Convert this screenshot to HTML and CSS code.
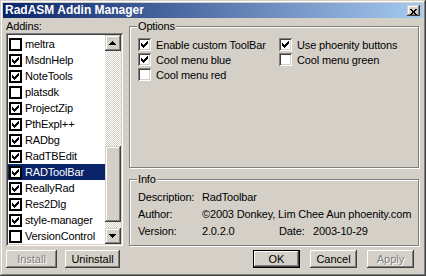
FILE: index.html
```html
<!DOCTYPE html>
<html lang="en">

<head>
  <meta charset="UTF-8">
  <meta name="viewport" content="width=device-width, initial-scale=1.0">
  <title>RadASM Addin Manager</title>
  <link rel="stylesheet" href="styles.css">
</head>

<body>
  <div class="window">
    <header class="titlebar">
      <span class="title">RadASM Addin Manager</span>
      <button class="close-btn" aria-label="Close">
        <svg width="7" height="6" viewBox="0 0 7 6"><path d="M0 0h2v1H0zM5 0h2v1H5zM1 1h2v1H1zM4 1h2v1H4zM2 2h3v2H2zM1 4h2v1H1zM4 4h2v1H4zM0 5h2v1H0zM5 5h2v1H5z"/></svg>
      </button>
    </header>

    <div class="dialog">
      <!-- left: addin list -->
      <section class="addins">
        <div class="label">Addins:</div>
        <div class="listbox">
          <ul class="items">
            <li class="item"><span class="box"></span>meltra</li>
            <li class="item"><span class="box"><svg class="tick" viewBox="0 0 7 7"><path d="M0 2h1v3H0zM1 3h1v3H1zM2 4h1v3H2zM3 3h1v3H3zM4 2h1v3H4zM5 1h1v3H5zM6 0h1v3H6z"/></svg></span>MsdnHelp</li>
            <li class="item"><span class="box"><svg class="tick" viewBox="0 0 7 7"><path d="M0 2h1v3H0zM1 3h1v3H1zM2 4h1v3H2zM3 3h1v3H3zM4 2h1v3H4zM5 1h1v3H5zM6 0h1v3H6z"/></svg></span>NoteTools</li>
            <li class="item"><span class="box"></span>platsdk</li>
            <li class="item"><span class="box"><svg class="tick" viewBox="0 0 7 7"><path d="M0 2h1v3H0zM1 3h1v3H1zM2 4h1v3H2zM3 3h1v3H3zM4 2h1v3H4zM5 1h1v3H5zM6 0h1v3H6z"/></svg></span>ProjectZip</li>
            <li class="item"><span class="box"><svg class="tick" viewBox="0 0 7 7"><path d="M0 2h1v3H0zM1 3h1v3H1zM2 4h1v3H2zM3 3h1v3H3zM4 2h1v3H4zM5 1h1v3H5zM6 0h1v3H6z"/></svg></span>PthExpl++</li>
            <li class="item"><span class="box"><svg class="tick" viewBox="0 0 7 7"><path d="M0 2h1v3H0zM1 3h1v3H1zM2 4h1v3H2zM3 3h1v3H3zM4 2h1v3H4zM5 1h1v3H5zM6 0h1v3H6z"/></svg></span>RADbg</li>
            <li class="item"><span class="box"><svg class="tick" viewBox="0 0 7 7"><path d="M0 2h1v3H0zM1 3h1v3H1zM2 4h1v3H2zM3 3h1v3H3zM4 2h1v3H4zM5 1h1v3H5zM6 0h1v3H6z"/></svg></span>RadTBEdit</li>
            <li class="item selected"><span class="box"><svg class="tick" viewBox="0 0 7 7"><path d="M0 2h1v3H0zM1 3h1v3H1zM2 4h1v3H2zM3 3h1v3H3zM4 2h1v3H4zM5 1h1v3H5zM6 0h1v3H6z"/></svg></span>RADToolBar</li>
            <li class="item"><span class="box"><svg class="tick" viewBox="0 0 7 7"><path d="M0 2h1v3H0zM1 3h1v3H1zM2 4h1v3H2zM3 3h1v3H3zM4 2h1v3H4zM5 1h1v3H5zM6 0h1v3H6z"/></svg></span>ReallyRad</li>
            <li class="item"><span class="box"><svg class="tick" viewBox="0 0 7 7"><path d="M0 2h1v3H0zM1 3h1v3H1zM2 4h1v3H2zM3 3h1v3H3zM4 2h1v3H4zM5 1h1v3H5zM6 0h1v3H6z"/></svg></span>Res2Dlg</li>
            <li class="item"><span class="box"><svg class="tick" viewBox="0 0 7 7"><path d="M0 2h1v3H0zM1 3h1v3H1zM2 4h1v3H2zM3 3h1v3H3zM4 2h1v3H4zM5 1h1v3H5zM6 0h1v3H6z"/></svg></span>style-manager</li>
            <li class="item"><span class="box"></span>VersionControl</li>
          </ul>
          <div class="scrollbar">
            <div class="sb-btn">
              <svg width="7" height="4" viewBox="0 0 7 4"><path d="M3 0h1v1h1v1h1v1h1v1H0V3h1V2h1V1h1z"/></svg>
            </div>
            <div class="sb-track">
              <div class="sb-thumb"></div>
            </div>
            <div class="sb-btn">
              <svg width="7" height="4" viewBox="0 0 7 4"><path d="M0 0h7v1H6v1H5v1H4v1H3V3H2V2H1V1H0z"/></svg>
            </div>
          </div>
        </div>
        <div class="btn-row">
          <button class="btn btn-install disabled">Install</button>
          <button class="btn btn-uninstall">Uninstall</button>
        </div>
      </section>

      <!-- right: options + info -->
      <section class="settings">
        <div class="group options">
          <span class="group-title">Options</span>
          <div class="option-grid">
            <label class="option"><span class="check"><svg class="tick" viewBox="0 0 7 7"><path d="M0 2h1v3H0zM1 3h1v3H1zM2 4h1v3H2zM3 3h1v3H3zM4 2h1v3H4zM5 1h1v3H5zM6 0h1v3H6z"/></svg></span>Enable custom ToolBar</label>
            <label class="option"><span class="check"><svg class="tick" viewBox="0 0 7 7"><path d="M0 2h1v3H0zM1 3h1v3H1zM2 4h1v3H2zM3 3h1v3H3zM4 2h1v3H4zM5 1h1v3H5zM6 0h1v3H6z"/></svg></span>Use phoenity buttons</label>
            <label class="option"><span class="check"><svg class="tick" viewBox="0 0 7 7"><path d="M0 2h1v3H0zM1 3h1v3H1zM2 4h1v3H2zM3 3h1v3H3zM4 2h1v3H4zM5 1h1v3H5zM6 0h1v3H6z"/></svg></span>Cool menu blue</label>
            <label class="option"><span class="check"></span>Cool menu green</label>
            <label class="option"><span class="check"></span>Cool menu red</label>
          </div>
        </div>

        <div class="group info">
          <span class="group-title">Info</span>
          <div class="info-grid">
            <span>Description:</span>
            <span class="span-3">RadToolbar</span>
            <span>Author:</span>
            <span class="span-3">©2003 Donkey, Lim Chee Aun phoenity.com</span>
            <span>Version:</span>
            <span>2.0.2.0</span>
            <span>Date:</span>
            <span>2003-10-29</span>
          </div>
        </div>

        <div class="btn-row actions">
          <button class="btn default">OK</button>
          <button class="btn">Cancel</button>
          <button class="btn disabled">Apply</button>
        </div>
      </section>
    </div>
  </div>
</body>

</html>
```

FILE: styles.css
```css
*,
*::before,
*::after {
  box-sizing: border-box;
}

body,
ul {
  margin: 0;
  padding: 0;
}

:root {

  /* COLORS */
  --face: #d4d0c8;
  --hilight: #ffffff;
  --shadow: #808080;
  --dkshadow: #404040;
  --select: #0a246a;
  --caption-from: #0a246a;
  --caption-to: #a6caf0;

  /* BEVELS */
  --raised: inset -1px -1px var(--dkshadow), inset 1px 1px var(--face),
    inset -2px -2px var(--shadow), inset 2px 2px var(--hilight);
  --button: inset -1px -1px var(--dkshadow), inset 1px 1px var(--hilight),
    inset -2px -2px var(--shadow), inset 2px 2px var(--face);
  --sunken: inset 1px 1px var(--shadow), inset -1px -1px var(--hilight),
    inset 2px 2px var(--dkshadow), inset -2px -2px var(--face);

  /* FONT */
  --ff-ui: "Liberation Sans", Arial, sans-serif;
  --fs-ui: 11px;
}

body {
  width: 426px;
  height: 276px;
  overflow: hidden;

  font-family: var(--ff-ui);
  font-size: var(--fs-ui);
  letter-spacing: -0.15px;
  color: #000;

  background-color: var(--face);
}

.window {
  display: flex;
  flex-direction: column;

  width: 426px;
  height: 276px;
  padding: 3px;

  background-color: var(--face);
  box-shadow: inset -1px -1px var(--dkshadow), inset 1px 1px var(--face),
    inset -2px -2px var(--shadow), inset 2px 2px var(--hilight);
}

/*** TITLE BAR ***/
.titlebar {
  display: flex;
  align-items: center;
  justify-content: space-between;

  height: 15px;
  padding: 0 3px 0 2px;

  background: linear-gradient(to right, var(--caption-from), var(--caption-to));
}

.title {
  font-size: 12px;
  font-weight: 700;
  line-height: 15px;
  letter-spacing: 0;

  color: #fff;
}

.close-btn {
  display: block;

  width: 13px;
  height: 11px;
  padding: 2px 0 0 3px;

  border: 0;

  background-color: var(--face);
  box-shadow: var(--raised);
}

.close-btn svg {
  display: block;
}

/*** DIALOG ***/
.dialog {
  display: grid;
  grid-template-columns: 117px 290px;
  column-gap: 6px;

  padding-left: 3px;
}

.addins {
  display: flex;
  flex-direction: column;

  padding-top: 2px;
}

.label {
  line-height: 13px;
}

/* list box */
.listbox {
  display: flex;

  height: 213px;
  padding: 2px;

  background-color: #fff;
  box-shadow: var(--sunken);
}

.items {
  flex: 1;

  padding-top: 1px;

  list-style: none;
}

.item {
  display: flex;
  align-items: center;
  gap: 3px;

  height: 16px;
  padding-left: 1px;

  white-space: nowrap;
}

.item.selected {
  color: #fff;
  background-color: var(--select);
}

.box {
  display: grid;
  place-items: center;
  flex: none;

  width: 13px;
  height: 13px;

  border: 2px solid #000;

  background-color: #fff;
}

.tick {
  display: block;

  width: 7px;
  height: 7px;
}

/* scroll bar */
.scrollbar {
  display: flex;
  flex-direction: column;
  flex: none;

  width: 16px;
}

.sb-btn {
  height: 16px;
  padding: 6px 0 0 4px;

  background-color: var(--face);
  box-shadow: var(--raised);
}

.sb-btn svg {
  display: block;
}

.sb-track {
  flex: 1;

  background: repeating-conic-gradient(var(--face) 0 25%, #fff 0 50%) 0 0 / 2px 2px;
}

.sb-thumb {
  height: 76px;
  margin-top: 95px;

  background-color: var(--face);
  box-shadow: var(--raised);
}

/* buttons */
.btn-row {
  display: flex;
  gap: 8px;

  margin-top: 4px;
}

.btn {
  height: 18px;
  padding: 0;

  border: 0;

  font: inherit;
  color: #000;

  background-color: var(--face);
  box-shadow: var(--button);
}

.btn.default {
  border: 1px solid #000;
}

.btn.disabled {
  color: var(--shadow);
  text-shadow: 1px 1px #fff;
}

.btn-install {
  width: 51px;
}

.btn-uninstall {
  width: 55px;
}

.actions {
  justify-content: flex-end;
  gap: 10px;

  padding-right: 5px;
}

.actions .btn {
  width: 47px;
}

/*** GROUP BOXES ***/
.settings {
  display: flex;
  flex-direction: column;
}

.group {
  position: relative;

  border: 1px solid var(--shadow);
  box-shadow: inset 1px 1px #fff, 1px 1px #fff;
}

.group-title {
  position: absolute;
  top: -7px;
  left: 7px;

  padding: 0 1px;

  line-height: 13px;

  background-color: var(--face);
}

.options {
  height: 142px;
  margin-top: 8px;
}

.option-grid {
  display: grid;
  grid-template-columns: 141px auto;
  grid-auto-rows: 15px;

  padding: 10px 0 0 8px;
}

.option {
  display: flex;
  align-items: center;
  gap: 5px;

  white-space: nowrap;
}

.check {
  display: grid;
  place-items: center;
  flex: none;

  width: 13px;
  height: 13px;

  background-color: #fff;
  box-shadow: var(--sunken);
}

.info {
  height: 67px;
  margin-top: 11px;
}

.info-grid {
  display: grid;
  grid-template-columns: 64px 77px 34px auto;

  padding: 9px 0 0 8px;

  line-height: 17px;
  white-space: nowrap;
}

.span-3 {
  grid-column: span 3;
}
```
